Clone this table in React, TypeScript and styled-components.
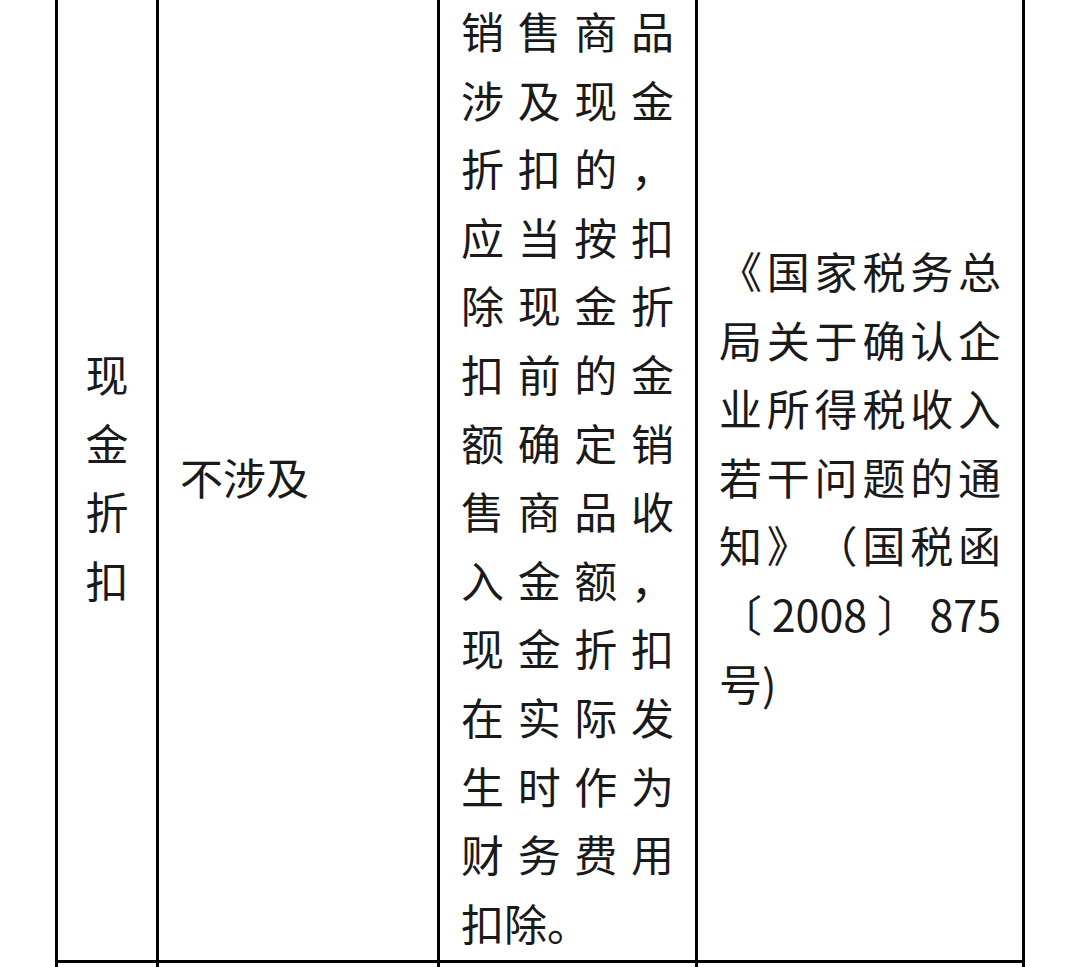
import React from "react";
import styled, { createGlobalStyle } from "styled-components";

const GlobalStyle = createGlobalStyle`
  html, body {
    margin: 0;
    padding: 0;
    background: #ffffff;
    overflow: hidden;
  }
  body {
    font-family: "Noto Sans CJK SC", "Noto Sans", sans-serif;
    color: #1a1a1a;
  }
`;

const Page = styled.div`
  width: 1080px;
  height: 967px;
  overflow: hidden;
  background: #ffffff;
`;

const Table = styled.div`
  margin-left: 55px;
  display: grid;
  grid-template-columns: 101px 281px 258px 327px;
  width: max-content;
  border-left: 3px solid #000;
`;

const Cell = styled.div<{ $align?: "center" | "left"; $pad?: number; $minHeight?: number }>`
  box-sizing: border-box;
  border-right: 3px solid #000;
  border-bottom: 3px solid #000;
  display: flex;
  align-items: center;
  padding: 0 ${(p) => p.$pad ?? 21}px;
  min-height: ${(p) => p.$minHeight ?? 0}px;
  font-size: 43px;
  line-height: 68.6px;
  text-align: ${(p) => p.$align ?? "left"};
  text-spacing-trim: space-all;
  color: #1a1a1a;
`;

const Text = styled.p<{ $justify?: boolean }>`
  margin: -4px 0 4px;
  width: 100%;
  text-align: ${(p) => (p.$justify ? "justify" : "inherit")};
  word-break: break-all;
`;

export default function App() {
  return (
    <Page>
      <GlobalStyle />
      <Table>
        <Cell $align="center" $pad={24}>
          <Text>现金折扣</Text>
        </Cell>
        <Cell>
          <Text>不涉及</Text>
        </Cell>
        <Cell>
          <Text $justify>
            销售商品涉及现金折扣的，应当按扣除现金折扣前的金额确定销售商品收入金额，现金折扣在实际发生时作为财务费用扣除。
          </Text>
        </Cell>
        <Cell>
          <Text $justify>
            《国家税务总局关于确认企业所得税收入若干问题的通知》（国税函〔2008〕875号)
          </Text>
        </Cell>
        <Cell $minHeight={120} />
        <Cell $minHeight={120} />
        <Cell $minHeight={120} />
        <Cell $minHeight={120} />
      </Table>
    </Page>
  );
}
